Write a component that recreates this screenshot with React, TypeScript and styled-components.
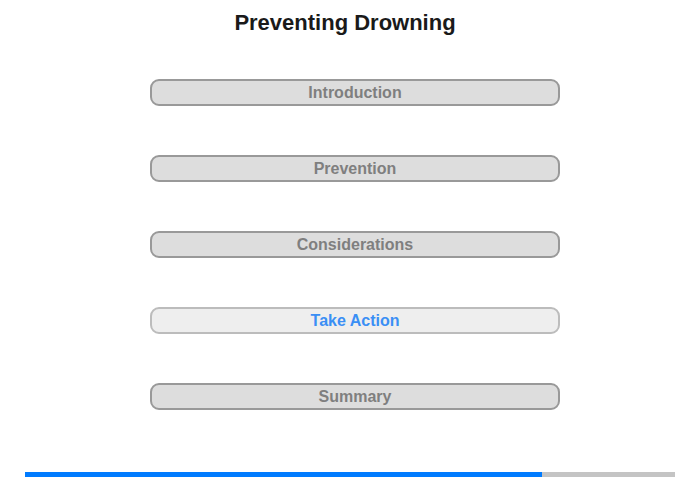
import React from "react";
import styled, { createGlobalStyle } from "styled-components";

const Global = createGlobalStyle`
  html, body { margin: 0; padding: 0; background: #fff; }
  body { font-family: "Liberation Sans", Arial, sans-serif; }
`;

const Page = styled.div`
  width: 700px;
  height: 480px;
  display: flex;
  flex-direction: column;
  align-items: center;
  box-sizing: border-box;
  padding-top: 10px;
`;

const Title = styled.h1`
  margin: 0 0 0 -10px;
  font-size: 22px;
  line-height: 26px;
  font-weight: bold;
  color: #1a1a1a;
`;

const Menu = styled.nav`
  display: flex;
  flex-direction: column;
  gap: 49px;
  margin-top: 43px;
  margin-left: 10px;
`;

const MenuButton = styled.button<{ $active?: boolean }>`
  width: 410px;
  height: 27px;
  box-sizing: border-box;
  border: 2px solid ${(p) => (p.$active ? "#bcbcbc" : "#999")};
  border-radius: 9px;
  background: ${(p) => (p.$active ? "#eeeeee" : "#dddddd")};
  color: ${(p) => (p.$active ? "#3a8ff5" : "#7f7f7f")};
  font-family: "Liberation Sans", Arial, sans-serif;
  font-weight: bold;
  font-size: 16px;
  line-height: 21px;
  padding: 0;
  cursor: pointer;
`;

const Track = styled.div`
  margin-top: auto;
  margin-bottom: 3px;
  width: 650px;
  height: 5px;
  background: #c4c4c4;
  display: flex;
`;

const Fill = styled.div`
  height: 100%;
  background: #007bff;
`;

const items = ["Introduction", "Prevention", "Considerations", "Take Action", "Summary"];

export default function App() {
  return (
    <>
      <Global />
      <Page>
        <Title>Preventing Drowning</Title>
        <Menu>
          {items.map((it) => (
            <MenuButton key={it} $active={it === "Take Action"}>
              {it}
            </MenuButton>
          ))}
        </Menu>
        <Track>
          <Fill style={{ width: `${(517 / 650) * 100}%` }} />
        </Track>
      </Page>
    </>
  );
}
